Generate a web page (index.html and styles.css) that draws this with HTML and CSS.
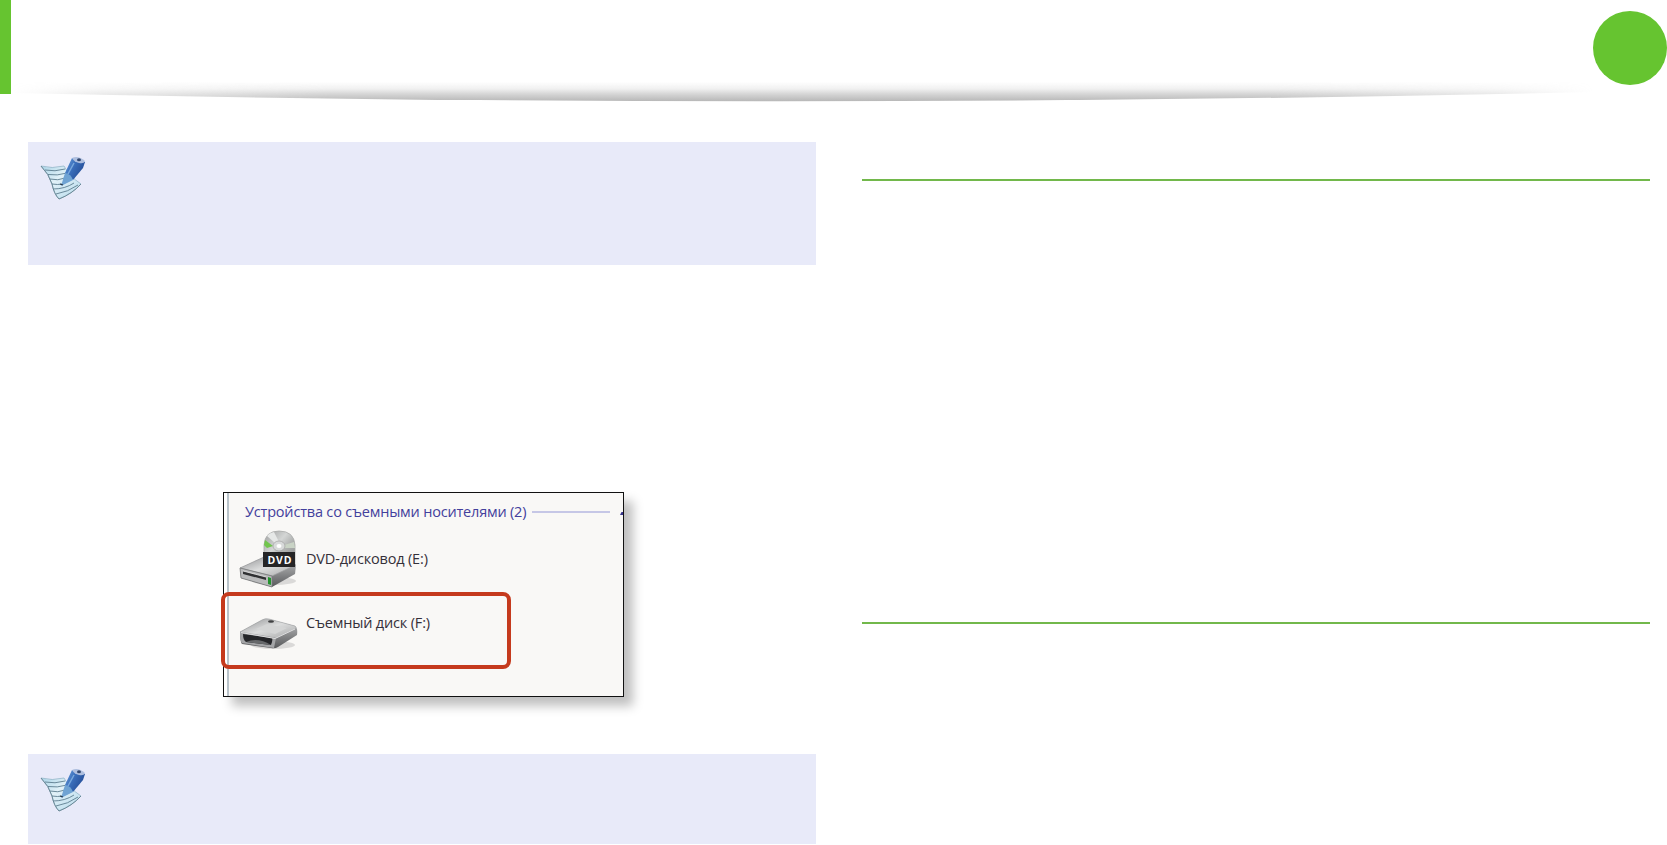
FILE: index.html
```html
<!DOCTYPE html>
<html lang="ru">
<head>
    <meta charset="UTF-8">
    <meta name="viewport" content="width=device-width, initial-scale=1.0">
    <title>Съемный диск</title>
    <link rel="stylesheet" href="styles.css">
</head>
<body>
    <svg class="defs" width="0" height="0" aria-hidden="true">
        <defs>
            <linearGradient id="pen" x1="0" y1="0" x2="1" y2="0.6">
                <stop offset="0" stop-color="#6fa3dc"/>
                <stop offset="0.45" stop-color="#3b70bd"/>
                <stop offset="1" stop-color="#234b94"/>
            </linearGradient>
            <linearGradient id="paper" x1="0" y1="0" x2="1" y2="1">
                <stop offset="0" stop-color="#a9d3e6"/>
                <stop offset="0.4" stop-color="#e1f1f8"/>
                <stop offset="1" stop-color="#b5d9ea"/>
            </linearGradient>
            <linearGradient id="metalTop" x1="0" y1="0" x2="1" y2="1">
                <stop offset="0" stop-color="#8f9092"/>
                <stop offset="0.5" stop-color="#dcdddd"/>
                <stop offset="1" stop-color="#a6a7a8"/>
            </linearGradient>
            <linearGradient id="metalSide" x1="0" y1="0" x2="0" y2="1">
                <stop offset="0" stop-color="#c4c5c6"/>
                <stop offset="1" stop-color="#58595b"/>
            </linearGradient>
            <linearGradient id="disc" x1="0" y1="0" x2="1" y2="1">
                <stop offset="0" stop-color="#9a9b9b"/>
                <stop offset="0.4" stop-color="#d4d6d5"/>
                <stop offset="0.6" stop-color="#b0b2b1"/>
                <stop offset="1" stop-color="#858686"/>
            </linearGradient>
            <symbol id="note" viewBox="0 0 46 46">
                <path d="M1 10Q12 13 24 10Q29 20 41 28Q33 37 19 43Q14 38 12 28Q9 18 1 10Z" fill="url(#paper)" stroke="#86afc2" stroke-width="0.700"/>
                <path d="M1 10Q9 18 12 28Q14 38 19 43Q32 38 41 28" fill="none" stroke="#64818f" stroke-width="0.900"/>
                <path d="M5 14Q15 16 25 13M8 18.500Q17 20 27 17M10 23Q18 25 25 22M12 28Q18 29 22 28M13 33Q25 33 34 27M16 38Q28 36 38 29" fill="none" stroke="#5d7e90" stroke-width="0.900"/>
                <path d="M32 2L45 6L43 12L33 24L25 17Z" fill="url(#pen)"/>
                <path d="M25 17Q31 18 33 24L21 30Z" fill="#6fa3d3"/>
                <path d="M34 7L28 18" fill="none" stroke="#78a8dd" stroke-width="1.500"/>
                <path d="M32 2Q38 -1 45 5Q44 8 39 7Q34 6 32 2Z" fill="#aebfdf"/>
                <ellipse cx="39" cy="3.800" rx="2" ry="1.500" fill="#33486f"/>
                <path d="M23 29L20 28" stroke="#273747" stroke-width="1.200"/>
            </symbol>
        </defs>
    </svg>

    <header class="page-header">
        <div class="accent"></div>
        <svg class="header-shadow" viewBox="0 0 1582 30" preserveAspectRatio="none">
            <defs>
                <linearGradient id="shade" gradientUnits="userSpaceOnUse" x1="0" y1="2" x2="0" y2="21">
                    <stop offset="0" stop-color="#b8b8b8" stop-opacity="0"/>
                    <stop offset="0.35" stop-color="#b8b8b8" stop-opacity="0.2"/>
                    <stop offset="0.65" stop-color="#b8b8b8" stop-opacity="0.6"/>
                    <stop offset="1" stop-color="#b8b8b8"/>
                </linearGradient>
                <linearGradient id="fade" x1="0" y1="0" x2="1" y2="0">
                    <stop offset="0" stop-color="#fff" stop-opacity="0"/>
                    <stop offset="0.06" stop-color="#fff" stop-opacity="0.5"/>
                    <stop offset="0.2" stop-color="#fff"/>
                    <stop offset="0.8" stop-color="#fff"/>
                    <stop offset="0.94" stop-color="#fff" stop-opacity="0.5"/>
                    <stop offset="1" stop-color="#fff" stop-opacity="0"/>
                </linearGradient>
                <mask id="ends"><rect width="1582" height="30" fill="url(#fade)"/></mask>
            </defs>
            <path d="M0 0H1582V12Q791 30 0 13Z" fill="url(#shade)" mask="url(#ends)"/>
        </svg>
        <div class="page-number"></div>
    </header>

    <main class="columns">
        <div class="column">
            <div class="note note-large">
                <svg class="note-icon"><use href="#note"/></svg>
            </div>

            <div class="explorer">
                <div class="group-title">
                    <span class="group-name">Устройства со съемными носителями (2)</span>
                    <span class="group-line"></span>
                    <span class="group-arrow"></span>
                </div>
                <div class="device">
                    <svg class="device-icon" viewBox="0 0 62 62">
                        <ellipse cx="36" cy="53" rx="22" ry="4" fill="#000" opacity="0.12"/>
                        <path d="M26 38V17Q27 3 41 3Q56 3 57 17V38Z" fill="url(#disc)" stroke="#a9abaa" stroke-width="0.800"/>
                        <path d="M29 8L37 15L41 14L36 4Q31 5 29 8Z" fill="#e6e8e7"/>
                        <path d="M27 12L35 18L29 20L26 17Z" fill="#72c64d"/>
                        <path d="M46 17L56 14L57 20L47 20Z" fill="#c9d3c5"/>
                        <ellipse cx="41" cy="18" rx="6" ry="5" fill="#d8dada" stroke="#999" stroke-width="0.600"/>
                        <ellipse cx="41" cy="18" rx="2.500" ry="2" fill="#fff"/>
                        <path d="M2 40L26 29L58 37L57 46L34 59L3 50Z" fill="url(#metalSide)"/>
                        <path d="M2 40L26 29L58 37L34 48Z" fill="url(#metalTop)" stroke="#9b9c9d" stroke-width="0.700"/>
                        <path d="M2 40L34 48V59L3 50Z" fill="#b9babb" stroke="#77787a" stroke-width="0.800"/>
                        <path d="M5 43L28 49V52L5 46Z" fill="#303133"/>
                        <path d="M5 43L28 49" stroke="#eee" stroke-width="0.800"/>
                        <path d="M30 49L33 50V57L30 56Z" fill="#23942e"/>
                        <path d="M25 24H57V39H25Z" fill="#252526"/>
                        <text class="dvd-label" x="41.500" y="35.500" text-anchor="middle" textLength="24">DVD</text>
                    </svg>
                    <span class="device-name dvd-name">DVD-дисковод (E:)</span>
                </div>
                <div class="device device-selected">
                    <svg class="device-icon device-icon-flat" viewBox="0 0 62 40">
                        <ellipse cx="35" cy="31" rx="22" ry="4" fill="#000" opacity="0.12"/>
                        <path d="M2 18L24 6Q27 4 31 5L57 12Q60 14 59 21L40 33Q37 35 33 34L4 30Q2 28 2 18Z" fill="url(#metalSide)"/>
                        <path d="M2 18L24 6Q27 4 31 5L57 12Q59 14 57 15L38 24Z" fill="url(#metalTop)" stroke="#a0a1a2" stroke-width="0.600"/>
                        <path d="M18 15L29 10L49 14L37 20Z" fill="#d4d5d5"/>
                        <ellipse cx="33" cy="7.500" rx="3" ry="1.300" fill="#404142"/>
                        <path d="M2 18L38 24L36 34L4 29Q2 27 2 18Z" fill="#a4a5a7"/>
                        <path d="M5 20L34 24Q35 26 33 31L8 28Q5 26 5 20Z" fill="#252629"/>
                        <path d="M8 28Q20 23 33 31Z" fill="#67696b"/>
                        <path d="M3 18.500L37 24.500L57 15" fill="none" stroke="#dededf" stroke-width="1"/>
                    </svg>
                    <span class="device-name disk-name">Съемный диск (F:)</span>
                </div>
            </div>

            <div class="note note-small">
                <svg class="note-icon"><use href="#note"/></svg>
            </div>
        </div>

        <div class="column column-right">
            <hr class="rule">
            <hr class="rule">
        </div>
    </main>
</body>
</html>
```

FILE: styles.css
```css
* {
    box-sizing: border-box;
}
body {
    font-family: "Open Sans", "Noto Sans", sans-serif;
    background: #fff;
    margin: 0;
    height: 845px;
    overflow: hidden;
}
.defs {
    display: block;
}
.page-header {
    display: flex;
    align-items: flex-start;
    height: 142px;
}
.accent {
    width: 11px;
    height: 94px;
    background: #66c430;
}
.header-shadow {
    width: 1582px;
    height: 30px;
    margin-top: 80px;
}
.page-number {
    width: 74px;
    height: 74px;
    margin-top: 11px;
    border-radius: 50%;
    background: #66c430;
}
.columns {
    display: grid;
    grid-template-columns: 788px 788px;
    column-gap: 46px;
    padding-left: 28px;
}
.column {
    display: flex;
    flex-direction: column;
}
.note {
    background: #e8eaf9;
    padding: 14px 0 0 12px;
}
.note-large {
    height: 123px;
}
.note-small {
    height: 90px;
    margin-top: 57px;
}
.note-icon {
    display: block;
    width: 46px;
    height: 46px;
}
.explorer {
    width: 401px;
    height: 205px;
    margin: 227px 0 0 195px;
    border: 1px solid #111;
    background: linear-gradient(90deg, #fff 3px, #b9c3ca 3px, #b9c3ca 5px, #f9f8f6 5px);
    box-shadow: 9px 9px 10px rgba(0, 0, 0, 0.25);
}
.group-title {
    display: flex;
    align-items: center;
    height: 35px;
    padding: 2px 0 0 21px;
    color: #43409c;
}
.group-name {
    width: 287px;
    font-size: 14.5px;
    letter-spacing: -0.19px;
    white-space: nowrap;
}
.group-line {
    width: 78px;
    height: 2px;
    background: #c6c7e6;
}
.group-arrow {
    width: 3px;
    height: 3px;
    margin: 4px 0 0 10px;
    background: #37348b;
    clip-path: polygon(50% 0, 100% 0, 100% 100%, 0 100%);
}
.device {
    display: flex;
    align-items: flex-start;
    height: 64px;
    padding-left: 14px;
}
.device-icon {
    width: 62px;
    height: 62px;
}
.device-icon-flat {
    height: 40px;
    margin-top: 18px;
}
.device-name {
    margin: 21px 0 0 6px;
    font-size: 14.5px;
    line-height: 20px;
    letter-spacing: -0.17px;
    color: #353039;
    white-space: nowrap;
}
.dvd-label {
    font: bold 10.5px "Open Sans", sans-serif;
    fill: #fff;
}
.device-selected {
    width: 290px;
    height: 77px;
    margin-left: -3px;
    border: 4px solid #c53a1d;
    border-radius: 8px;
    padding-left: 13px;
}
.device-selected .device-name {
    margin-top: 17px;
}
.column-right {
    gap: 441px;
    padding-top: 37px;
}
.rule {
    width: 100%;
    height: 2px;
    margin: 0;
    border: 0;
    background: #72b84b;
}
```
